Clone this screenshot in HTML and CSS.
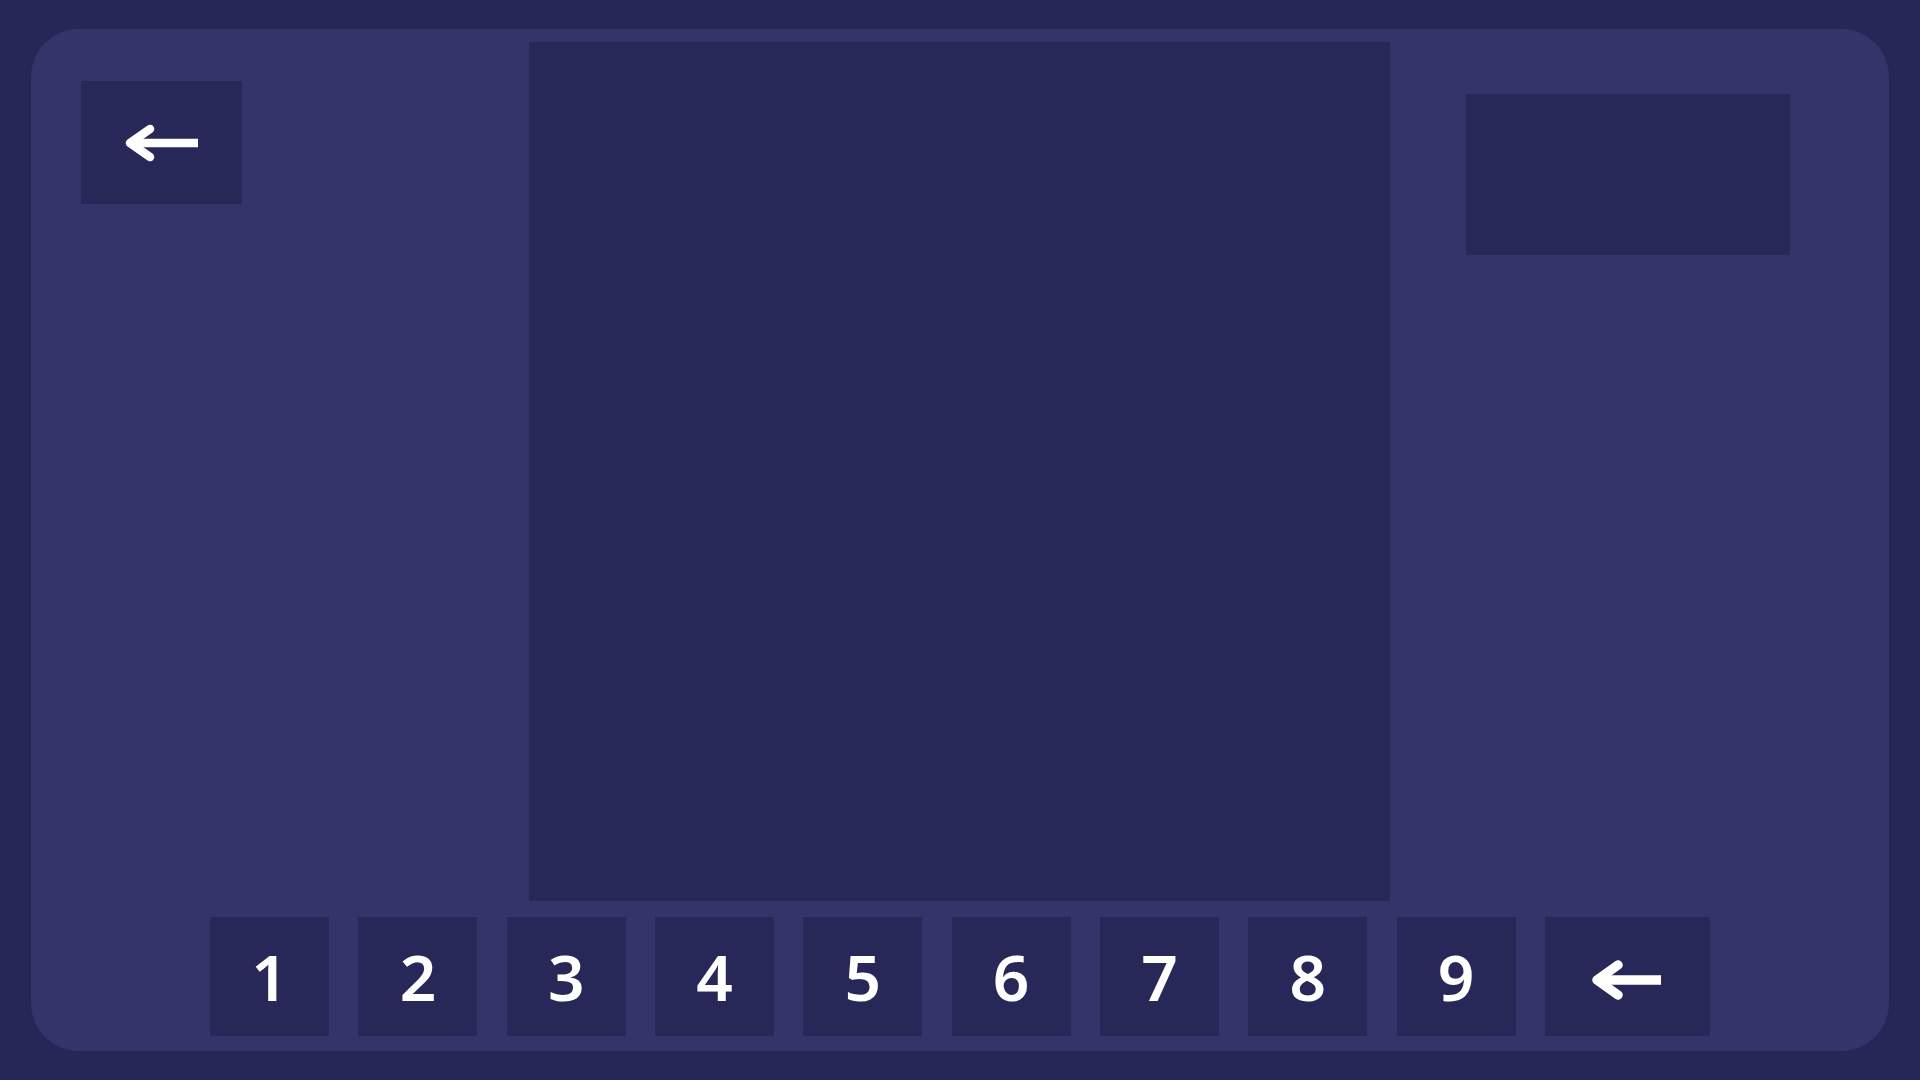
FILE: index.html
```html
<!DOCTYPE html>
<html lang="en">
<head>
<meta charset="utf-8">
<title>Keypad</title>
<link rel="stylesheet" href="styles.css">
</head>
<body>
<div class="panel">
  <div class="top">
    <div class="left-col">
      <button class="back" aria-label="Back">
        <svg class="arrow" width="76" height="38" viewBox="0 0 76 38"><path d="M26 5 L6 19 L26 33" fill="none" stroke="#fff" stroke-width="8.5" stroke-linecap="round" stroke-linejoin="round"/><path d="M8 19 H74" stroke="#fff" stroke-width="8.5" stroke-linecap="butt"/></svg>
      </button>
    </div>
    <div class="video"></div>
    <div class="right-col">
      <div class="info-box"></div>
    </div>
  </div>
  <div class="keypad">
    <button class="key">1</button>
    <button class="key">2</button>
    <button class="key">3</button>
    <button class="key">4</button>
    <button class="key">5</button>
    <button class="key">6</button>
    <button class="key">7</button>
    <button class="key">8</button>
    <button class="key">9</button>
    <button class="key key-wide" aria-label="Backspace">
      <svg class="arrow" width="72" height="40" viewBox="0 0 72 40"><path d="M27 5 L6 20 L27 35" fill="none" stroke="#fff" stroke-width="9.5" stroke-linecap="round" stroke-linejoin="round"/><path d="M8 20 H70" stroke="#fff" stroke-width="9.5" stroke-linecap="butt"/></svg>
    </button>
  </div>
</div>
</body>
</html>
```

FILE: styles.css
```css
html, body {
  margin: 0;
  padding: 0;
}
body {
  width: 1920px;
  height: 1080px;
  box-sizing: border-box;
  padding: 29px 31px;
  background: #262756;
  font-family: "Noto Sans", "Open Sans", sans-serif;
  overflow: hidden;
}
.panel {
  width: 1858px;
  height: 1022px;
  box-sizing: border-box;
  background: #33356a;
  border-radius: 48px;
  padding: 13px 0 15px;
  display: flex;
  flex-direction: column;
}
.top {
  display: flex;
  height: 859px;
}
.left-col {
  width: 498px;
  flex: none;
}
.back {
  margin: 39px 0 0 50px;
  width: 161px;
  height: 123px;
  border: 0;
  padding: 0;
  background: #272858;
  display: flex;
  align-items: center;
  justify-content: center;
}
.video {
  width: 861px;
  height: 859px;
  flex: none;
  background: #272858;
}
.right-col {
  flex: 1;
}
.info-box {
  margin: 52px 0 0 76px;
  width: 324px;
  height: 161px;
  background: #272858;
}
.keypad {
  margin-top: 16px;
  display: flex;
  justify-content: center;
  gap: 29.3px;
}
.key {
  width: 119px;
  height: 119px;
  border: 0;
  padding: 0;
  background: #272858;
  color: #ffffff;
  font-family: "Noto Sans", "Open Sans", sans-serif;
  font-weight: 600;
  font-size: 64px;
  line-height: 1;
  display: flex;
  align-items: center;
  justify-content: center;
  box-sizing: border-box;
}
.key-wide {
  width: 165px;
  padding-top: 6px;
}
.arrow {
  display: block;
}
```
